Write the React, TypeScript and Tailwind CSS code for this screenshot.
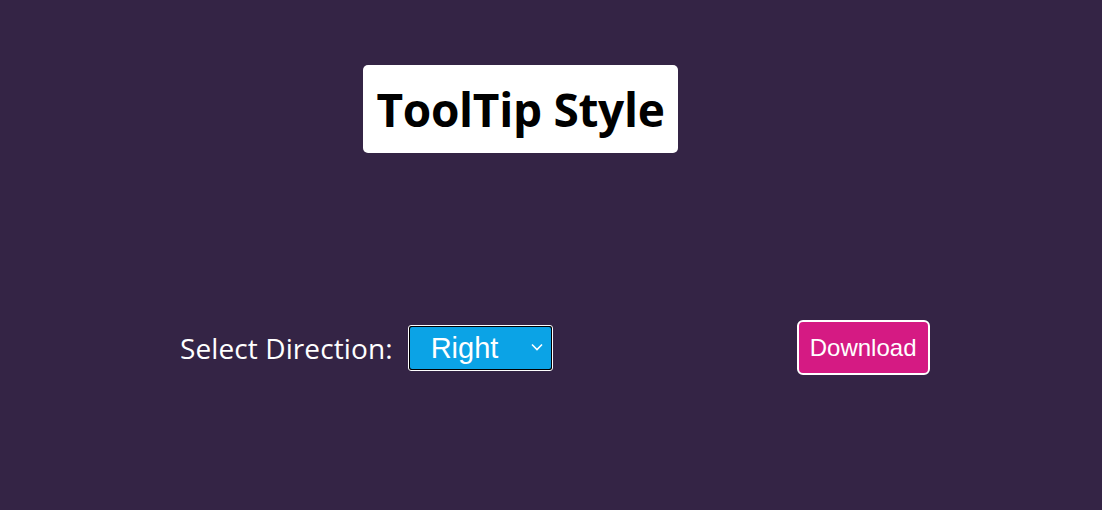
import { useState } from 'react';

const DIRECTIONS = ['Top', 'Right', 'Bottom', 'Left'];

function App() {
  const [direction, setDirection] = useState('Right');

  return (
    <div className="w-full h-[510px] bg-[#342445] flex flex-col">
      <div className="pt-[65px] pl-[363px]">
        <div className="w-[315px] h-[88px] bg-white rounded-[5px] flex items-center justify-center">
          <h1 className="text-[46px] font-bold text-black font-['Open_Sans','Noto_Sans',sans-serif] tracking-[-0.3px] leading-none">
            ToolTip Style
          </h1>
        </div>
      </div>
      <div className="flex items-center mt-[167px] pl-[180px]">
        <span className="text-[28px] text-white font-['Open_Sans','Noto_Sans',sans-serif] tracking-[0.1px]">
          Select Direction:
        </span>
        <div className="relative ml-[15px] w-[145px] h-[46px] rounded-[3px] border border-white bg-black p-px">
          <select
            value={direction}
            onChange={(e) => setDirection(e.target.value)}
            className="appearance-none w-full h-full bg-[#0ba3e6] rounded-[2px] text-white text-[29px] font-['Liberation_Sans',sans-serif] pl-[21px] outline-none">
            {DIRECTIONS.map((d) => (
              <option key={d} value={d}>
                {d}
              </option>
            ))}
          </select>
          <svg
            className="absolute right-[9px] top-[17px] pointer-events-none"
            width="12"
            height="8"
            viewBox="0 0 12 8">
            <path d="M1 1.5 L6 6.5 L11 1.5" stroke="white" strokeWidth="1.6" fill="none" />
          </svg>
        </div>
        <button className="ml-[244px] w-[133px] h-[55px] bg-[#d51a83] border-2 border-white rounded-[6px] text-white text-[24px] font-['Liberation_Sans',sans-serif]">
          Download
        </button>
      </div>
    </div>
  );
}

export default App;
